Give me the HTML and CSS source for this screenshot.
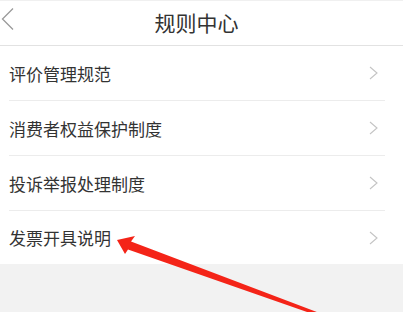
FILE: index.html
```html
<!DOCTYPE html>
<html lang="zh">
<head>
<meta charset="utf-8">
<link rel="stylesheet" href="styles.css">
</head>
<body>
<div class="page">
  <header class="nav">
    <span class="back">
      <svg width="14" height="24" viewBox="0 0 14 24"><polyline points="12,1.5 1.5,12 12,22.5" fill="none" stroke="#9a9a9a" stroke-width="1.3"/></svg>
    </span>
    <h1 class="title">规则中心</h1>
  </header>
  <ul class="list">
    <li class="item"><span class="label">评价管理规范</span><svg class="chev" width="9" height="14" viewBox="0 0 9 14"><polyline points="1,1 8,7 1,13" fill="none" stroke="#c4c4c4" stroke-width="1.1"/></svg></li>
    <li class="item"><span class="label">消费者权益保护制度</span><svg class="chev" width="9" height="14" viewBox="0 0 9 14"><polyline points="1,1 8,7 1,13" fill="none" stroke="#c4c4c4" stroke-width="1.1"/></svg></li>
    <li class="item"><span class="label">投诉举报处理制度</span><svg class="chev" width="9" height="14" viewBox="0 0 9 14"><polyline points="1,1 8,7 1,13" fill="none" stroke="#c4c4c4" stroke-width="1.1"/></svg></li>
    <li class="item last"><span class="label">发票开具说明</span><svg class="chev" width="9" height="14" viewBox="0 0 9 14"><polyline points="1,1 8,7 1,13" fill="none" stroke="#c4c4c4" stroke-width="1.1"/></svg></li>
  </ul>
  <div class="rest"></div>
  <svg class="arrow" width="403" height="312" viewBox="0 0 403 312">
    <polygon points="117,240 135,236 131,241.5 330,317 330,320 128,249.5 125,254" fill="#f42418"/>
  </svg>
</div>
</body>
</html>
```

FILE: styles.css
```css
html, body {
  margin: 0;
  padding: 0;
  background: #f2f2f2;
}
.page {
  position: relative;
  width: 403px;
  height: 312px;
  overflow: hidden;
  font-family: "Noto Sans CJK SC", "Noto Sans", sans-serif;
  color: #333;
  display: flex;
  flex-direction: column;
}
.nav {
  box-sizing: border-box;
  height: 46px;
  border-top: 1px solid #f0f0f0;
  border-bottom: 1px solid #e2e2e2;
  background: #fff;
  display: flex;
  align-items: center;
  justify-content: center;
  position: relative;
}
.back {
  position: absolute;
  left: 1px;
  top: 6px;
  display: flex;
}
.title {
  margin: 0;
  font-size: 21px;
  font-weight: normal;
  color: #333;
  line-height: 1;
  padding-right: 10px;
  padding-bottom: 2px;
}
.list {
  list-style: none;
  margin: 0;
  padding: 0;
  background: #fff;
}
.item {
  height: 54px;
  margin-left: 9px;
  margin-right: 18px;
  border-bottom: 1px solid #ececec;
  display: flex;
  align-items: center;
  justify-content: space-between;
}
.item.last {
  border-bottom: none;
  height: 53px;
}
.label {
  font-size: 17px;
  color: #333;
  line-height: 1;
}
.chev {
  margin-right: 7px;
  display: block;
}
.rest {
  flex: 1;
  background: #f2f2f2;
}
.arrow {
  position: absolute;
  left: 0;
  top: 0;
}
```
